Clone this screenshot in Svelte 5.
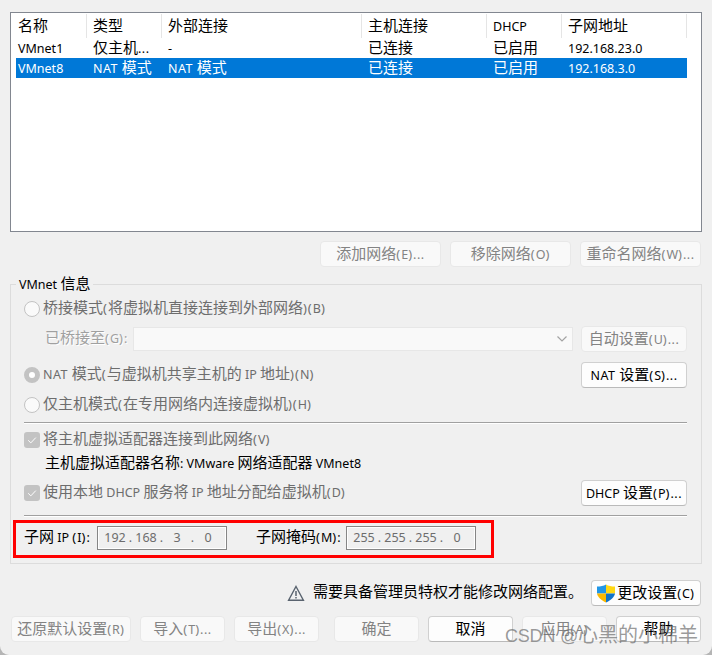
<script lang="ts">
  interface Network {
    name: string;
    type: string;
    external: string;
    host: string;
    dhcp: string;
    subnet: string;
  }

  const headers = ['名称', '类型', '外部连接', '主机连接', 'DHCP', '子网地址'];
  const networks: Network[] = [
    { name: 'VMnet1', type: '仅主机...', external: '-', host: '已连接', dhcp: '已启用', subnet: '192.168.23.0' },
    { name: 'VMnet8', type: 'NAT 模式', external: 'NAT 模式', host: '已连接', dhcp: '已启用', subnet: '192.168.3.0' },
  ];
  const subnetIp = ['192', '168', '3', '0'];
  const subnetMask = ['255', '255', '255', '0'];

  let selected = $state('VMnet8');

  // Latin runs are set smaller than the Chinese ones, brackets and ellipses a little wider.
  function runs(text: string) {
    return text
      .split(/([\u3000-\u9fff]+|[()]+|\.{3}|NAT )/)
      .filter(Boolean)
      .map((s) => {
        if (/[\u3000-\u9fff]/.test(s)) return { s, kind: 'cjk' };
        if (/^[()]/.test(s)) return { s, kind: 'paren' };
        if (s === '...' || s === 'NAT ') return { s, kind: 'wide' };
        return { s, kind: 'lat' };
      });
  }
</script>

{#snippet label(text: string)}
  <span class="label">{#each runs(text) as r}<span class={r.kind}>{r.s}</span>{/each}</span>
{/snippet}

{#snippet address(parts: string[])}
  <div class="address">
    {#each parts as part, i}
      {#if i > 0}<span class="dot">.</span>{/if}
      <span class="octet">{part}</span>
    {/each}
  </div>
{/snippet}

{#snippet check()}
  <span class="checkbox">
    <svg width="16" height="16" viewBox="0 0 16 16" fill="none" stroke="#fff">
      <path d="M4.2 8.3 6.8 10.9 11.8 5.6" />
    </svg>
  </span>
{/snippet}

<main class="dialog">
  <div class="list">
    <div class="row head">
      {#each headers as h}<div class="cell">{@render label(h)}</div>{/each}
    </div>
    {#each networks as n}
      <div class="row" class:selected={selected === n.name} onclick={() => (selected = n.name)} role="presentation">
        {#each [n.name, n.type, n.external, n.host, n.dhcp, n.subnet] as value}
          <div class="cell">{@render label(value)}</div>
        {/each}
      </div>
    {/each}
  </div>

  <div class="actions">
    <button disabled>{@render label('添加网络(E)...')}</button>
    <button disabled>{@render label('移除网络(O)')}</button>
    <button disabled>{@render label('重命名网络(W)...')}</button>
  </div>

  <section class="group">
    <div class="legend">{@render label('VMnet 信息')}</div>
    <div class="line bridged off"><span class="radio"></span>{@render label('桥接模式(将虚拟机直接连接到外部网络)(B)')}</div>
    <div class="line bridge-to">
      <span class="etched">{@render label('已桥接至(G):')}</span>
      <div class="combo">
        <svg width="12" height="8" viewBox="0 0 12 8" fill="none" stroke="#a3a3a3" stroke-width="1.2"><path d="M1.5 1.5 6 6 10.5 1.5" /></svg>
      </div>
      <button class="side" disabled>{@render label('自动设置(U)...')}</button>
    </div>
    <div class="line nat off">
      <span class="radio on"></span>{@render label('NAT 模式(与虚拟机共享主机的 IP 地址)(N)')}
      <button class="side">{@render label('NAT 设置(S)...')}</button>
    </div>
    <div class="line host off"><span class="radio"></span>{@render label('仅主机模式(在专用网络内连接虚拟机)(H)')}</div>
    <hr />
    <div class="line adapter off">{@render check()}{@render label('将主机虚拟适配器连接到此网络(V)')}</div>
    <div class="line adapter-name">{@render label('主机虚拟适配器名称: VMware 网络适配器 VMnet8')}</div>
    <div class="line dhcp off">
      {@render check()}{@render label('使用本地 DHCP 服务将 IP 地址分配给虚拟机(D)')}
      <button class="side">{@render label('DHCP 设置(P)...')}</button>
    </div>
    <hr />
    <div class="subnet">
      <div class="first">{@render label('子网 IP (I):')}</div>
      {@render address(subnetIp)}
      <div class="second">{@render label('子网掩码(M):')}</div>
      {@render address(subnetMask)}
    </div>
  </section>

  <div class="notice">
    <svg width="18" height="17" viewBox="0 0 18 17" fill="none" stroke="#59636f">
      <path d="M9 1.5 16.4 15.200H1.6Z" stroke-width="1.4" />
      <path d="M9 6v5M9 12v1.6" stroke-width="1.5" />
    </svg>
    {@render label('需要具备管理员特权才能修改网络配置。')}
    <button class="change">
      <svg width="18" height="19" viewBox="0 0 18 19">
        <path fill="#2196e6" d="M9 .5C6.600 2 3.500 2.600 0 2.600V9.500H9Z" />
        <path fill="#ffd814" d="M9 .5C11.400 2 14.500 2.600 18 2.600V9.500H9Z" />
        <path fill="#fbb900" d="M0 9.500H9V18.500C4.500 16.600.8 13.500 0 9.500Z" />
        <path fill="#1173c9" d="M18 9.500H9V18.500C13.500 16.600 17.200 13.500 18 9.500Z" />
      </svg>
      {@render label('更改设置(C)')}
    </button>
  </div>

  <footer>
    <button class="restore" disabled>{@render label('还原默认设置(R)')}</button>
    <button disabled>{@render label('导入(T)...')}</button>
    <button class="export" disabled>{@render label('导出(X)...')}</button>
    <button disabled>{@render label('确定')}</button>
    <button>{@render label('取消')}</button>
    <button disabled>{@render label('应用(A)')}</button>
    <button>{@render label('帮助')}</button>
  </footer>

  <div class="watermark">CSDN @<span>心黑的小棉羊</span></div>
</main>

<style>
  :global(body) { background: #b5b5b5; overflow: hidden; }

  .dialog {
    position: relative; box-sizing: border-box; width: 712px; height: 655px;
    padding: 12px 10px 0; display: flex; flex-direction: column;
    background: #f0f0f0; border-radius: 0 0 9px 9px; color: #000;
    font-family: "Noto Sans", "Noto Sans CJK SC", sans-serif; font-size: 12.5px;
  }

  .label { display: inline-block; white-space: pre; line-height: 20px; height: 20px; }
  .label span { line-height: 1; }
  .cjk { font-family: "Noto Sans CJK SC", sans-serif; font-size: 15px; }
  .paren { font-size: 13px; letter-spacing: 1px; }
  .wide { letter-spacing: 0.5px; }

  .list {
    box-sizing: border-box; height: 220px; padding: 1px 5px;
    border: 1px solid #828790; background: #fff;
  }
  .row {
    display: grid; grid-template-columns: 71px 75px 200px 125px 75px 125px;
    width: 671px; height: 20px;
  }
  .row.head { height: 24px; }
  .cell { box-sizing: border-box; padding-left: 6px; line-height: 20px; }
  .cell:first-child { padding-left: 2px; }
  .row:not(.head) .cell { padding-top: 0.6px; }
  .head .cell { padding-top: 3px; border-right: 1px solid #e5e5e5; }
  .selected { background: #0078d7; color: #fff; }

  button {
    box-sizing: border-box; display: flex; align-items: center; justify-content: center;
    width: 85px; height: 26px; padding: 1px 0 0; margin: 0;
    font: inherit; color: #000; background: #fdfdfd;
    border: 1px solid #d0d0d0; border-bottom-color: #bababa; border-radius: 4px;
  }
  button:disabled { color: #838383; background: #f9f9f9; border-color: #e8e8e8; }

  .actions { display: flex; justify-content: flex-end; gap: 9px; padding: 9px 1px 0 0; }
  .actions button { width: 121px; }

  .group {
    box-sizing: border-box; width: 692px; height: 280px; margin-top: 17px; padding: 0 14px 0 13px;
    border: 1px solid #dcdcdc; display: flex; flex-direction: column;
  }
  .legend { align-self: flex-start; height: 20px; margin: -10px 0 0 -8px; padding: 0 3px; background: #f0f0f0; }
  .line { display: flex; align-items: center; flex: none; }
  .off > :global(.label) { color: #6d6d6d; }
  .bridged { height: 27px; }
  .bridge-to { height: 34px; padding-left: 21px; }
  .nat { height: 38px; }
  .host { height: 22px; }
  .adapter { height: 24px; margin-top: 4px; }
  .adapter-name { height: 22px; padding: 1px 0 0 21px; box-sizing: border-box; }
  .dhcp { height: 38px; }
  .side { width: 106px; margin-left: auto; }
  .etched { width: 88px; color: #a0a0a0; text-shadow: 1px 1px #fff; }
  .combo {
    box-sizing: border-box; width: 440px; height: 24px; padding-right: 4px;
    display: flex; align-items: center; justify-content: flex-end;
    border: 1px solid #e7e7e7; background: #f9f9f9;
  }

  .radio {
    box-sizing: border-box; width: 16px; height: 16px; margin-right: 3px;
    border: 1px solid #c3c3c3; border-radius: 50%; background: #fafafa;
  }
  .radio.on { border: 5px solid #c3c3c3; background: #fff; }
  .checkbox { width: 16px; height: 16px; margin-right: 3px; border-radius: 3px; background: #c3c3c3; }
  .checkbox svg { display: block; }

  hr { width: 663px; height: 1px; margin: 6px 0 0; border: 0; flex: none; background: #a0a0a0; border-bottom: 1px solid #fff; }
  .dhcp + hr { margin-top: 3px; }

  .subnet {
    box-sizing: border-box; width: 481px; height: 38px; margin: 3px 0 0 -11px; flex: none;
    padding-bottom: 3px; display: flex; align-items: center; border: 3px solid #f00;
  }
  .first { box-sizing: border-box; width: 81px; padding-left: 8px; }
  .second { box-sizing: border-box; width: 119px; padding-left: 29px; }
  .address {
    box-sizing: border-box; width: 130px; height: 24px; padding: 0 0 1px 4px;
    display: flex; align-items: center; color: #6d6d6d;
    border: 1px solid #868686; box-shadow: inset 0 0 0 1px #fff;
  }
  .octet { width: 26px; text-align: center; }
  .dot { width: 5px; text-align: center; }

  .notice { display: flex; align-items: center; height: 26px; margin-top: 16px; padding: 0 1px 0 277px; }
  .notice > svg { margin-right: 8px; }
  .notice .change { width: 110px; margin-left: auto; gap: 2px; }
  .change svg { margin-bottom: 1px; }

  footer { display: flex; gap: 9px; margin-top: 10px; padding-left: 1px; }
  footer .restore { width: 120px; }
  footer .export { margin-right: 6px; }

  .watermark {
    position: absolute; left: 505px; top: 622px; line-height: 28px; white-space: nowrap;
    font-family: "Liberation Sans", sans-serif; font-size: 18px; letter-spacing: -0.2px;
    color: rgba(110, 110, 110, 0.7);
  }
  .watermark span { font-family: "Noto Sans CJK SC", sans-serif; font-size: 20px; line-height: 1; letter-spacing: 0; }
</style>
